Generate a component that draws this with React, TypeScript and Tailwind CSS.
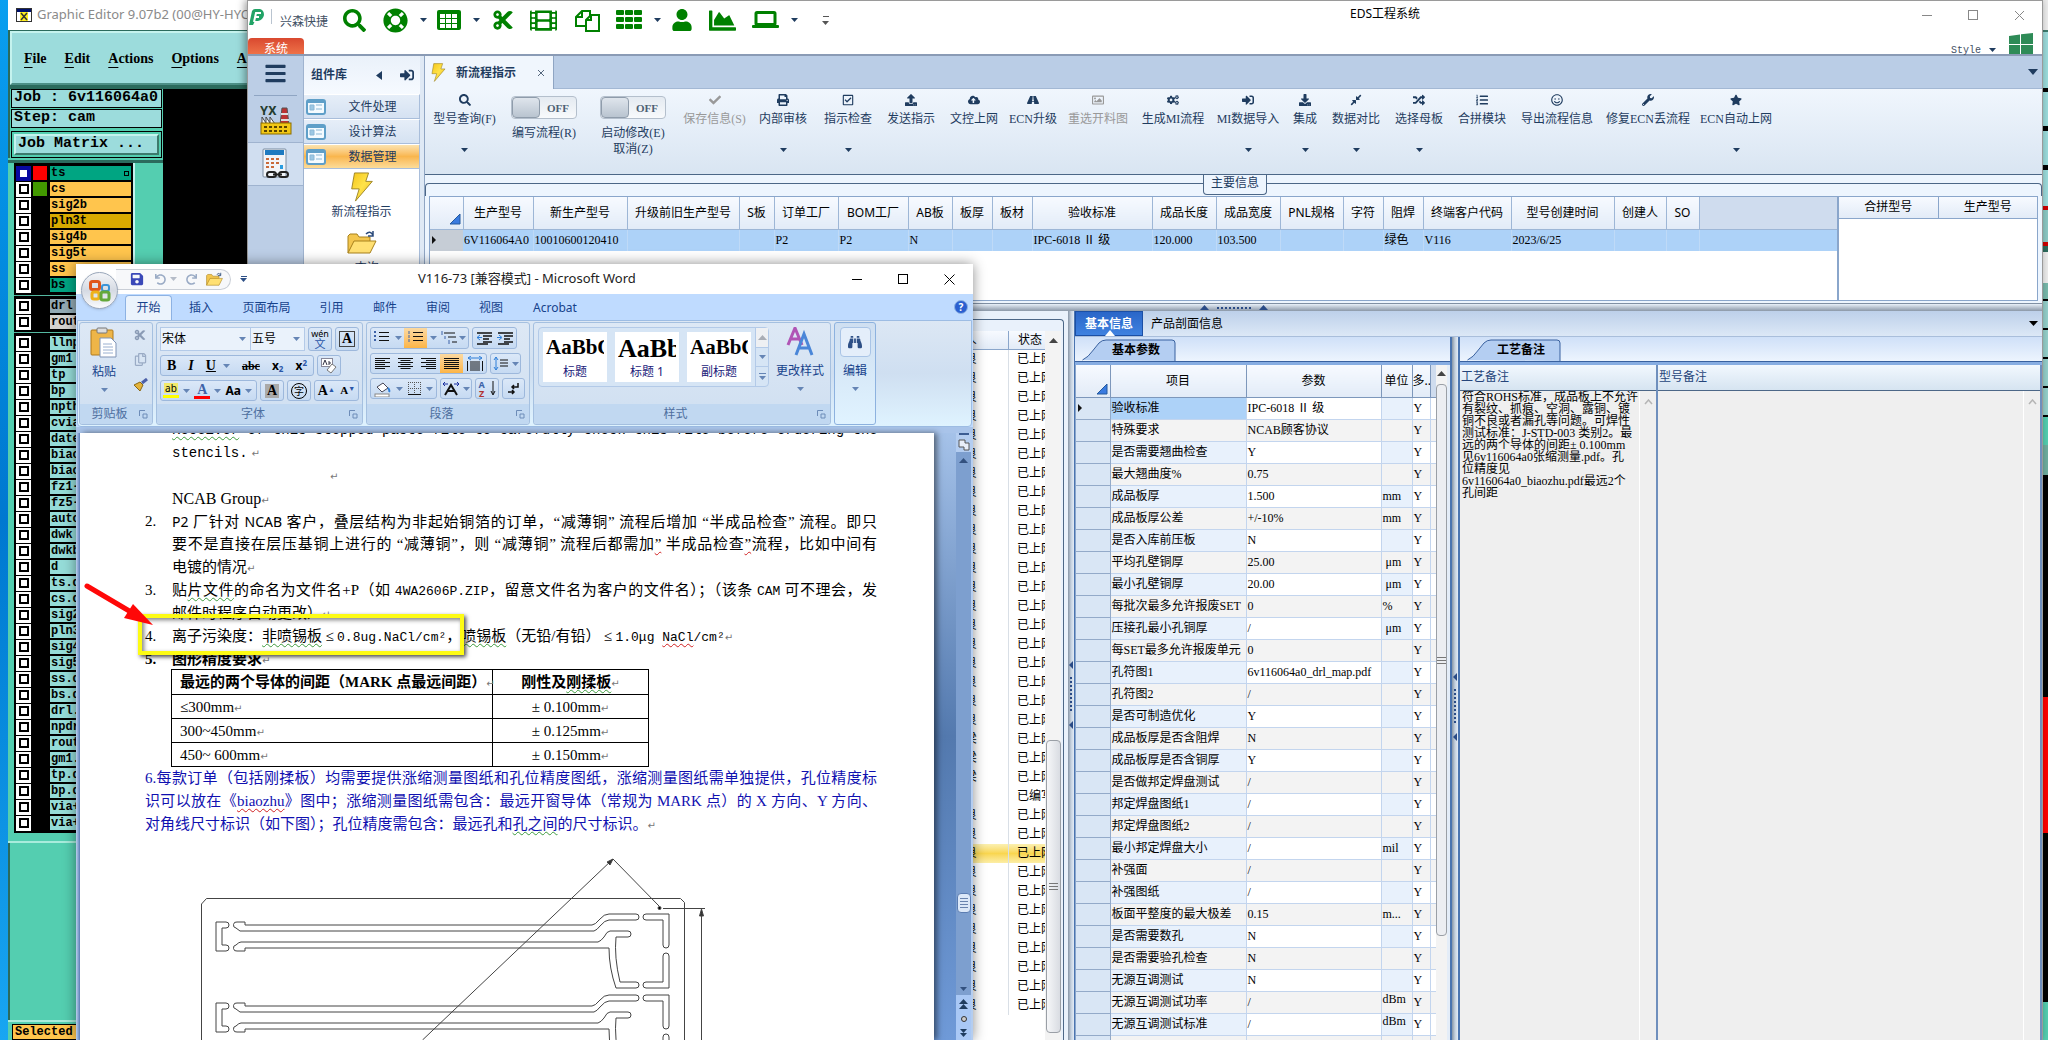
import React from "react";
import {
  FaSearch, FaLifeRing, FaCut, FaFilm, FaRegCopy, FaUser, FaChartArea, FaCheck, FaPrint, FaRegCheckSquare,
  FaUpload, FaCloudUploadAlt, FaRoad, FaRegImage, FaCogs, FaSignInAlt, FaDownload, FaCompressAlt, FaRandom,
  FaListOl, FaRegSmile, FaWrench, FaStar, FaBars, FaSave, FaUndo, FaRedo, FaBinoculars,
} from "react-icons/fa";

const SONG = "font-['Liberation_Serif','Noto_Sans_CJK_SC',serif]";
const UI = "font-['Noto_Sans','Noto_Sans_CJK_SC',sans-serif]";
const MONO = "font-['Liberation_Mono','Noto_Sans_CJK_SC',monospace]";

function Caret({ className = "text-[#1f3c5f]" }: { className?: string }) {
  return (
    <svg width="7" height="4" viewBox="0 0 7 4" className={`shrink-0 ${className}`}>
      <path d="M0 0h7L3.500 4z" fill="currentColor" />
    </svg>
  );
}

function CaretUp({ className = "text-[#1f3c5f]" }: { className?: string }) {
  return (
    <svg width="9" height="5" viewBox="0 0 9 5" className={`shrink-0 ${className}`}>
      <path d="M0 5h9L4.500 0z" fill="currentColor" />
    </svg>
  );
}

function Bolt({ className }: { className: string }) {
  return (
    <svg viewBox="0 0 24 32" className={className}>
      <defs>
        <linearGradient id="bolt" x1="0" y1="0" x2="1" y2="1">
          <stop offset="0" stopColor="#f5c518" />
          <stop offset="0.5" stopColor="#ffe34a" />
          <stop offset="1" stopColor="#e8b012" />
        </linearGradient>
      </defs>
      <path d="M4 1h15l-3 9h7L5 31l4-13H1z" fill="url(#bolt)" stroke="#9c8426" strokeWidth="1" />
    </svg>
  );
}

function Folder({ className }: { className: string }) {
  return (
    <svg viewBox="0 0 30 24" className={className}>
      <path d="M1 23V6l2-2h7l2 3h11v4" fill="#f3c64e" stroke="#a8811c" />
      <path d="M1 23l6-12h22l-6 12z" fill="#ffe073" stroke="#a8811c" />
      <path d="M19 4q4-4 7 1M26 1v5h-5" fill="none" stroke="#2b4a7a" strokeWidth="1.500" />
    </svg>
  );
}

/* ---------- Graphic Editor ---------- */

type Layer = { name: string; bg: string; swatch?: string; active?: boolean };
const ORANGE = "bg-[#ffc54d]";
const TEAL = "bg-[#95dcd8]";
const boardLayers: Layer[] = [
  { name: "ts", bg: "bg-[#00a582]", swatch: "bg-[#ff0000]", active: true },
  { name: "cs", bg: ORANGE, swatch: "bg-[#429900]" },
  { name: "sig2b", bg: ORANGE },
  { name: "pln3t", bg: "bg-[#d9aa00]" },
  { name: "sig4b", bg: ORANGE },
  { name: "sig5t", bg: ORANGE },
  { name: "ss", bg: ORANGE },
  { name: "bs", bg: "bg-[#00a582]" },
];
const drillLayers: Layer[] = [
  { name: "drl", bg: "bg-[#93aab4]" },
  { name: "rout", bg: "bg-[#d4d2cf]" },
];
const miscLayers: Layer[] = [
  "llnp", "gm1", "tp", "bp", "npth", "cvia", "date", "biaoji", "biaoji2", "fz1-6", "fz5-2", "auto", "dwk", "dwkb", "d",
  "ts.d", "cs.d", "sig2b", "pln3t", "sig4b", "sig5t", "ss.d", "bs.d", "drl.d", "npdrl", "rout.", "gm1.d", "tp.d", "bp.d",
  "via+", "via+1",
].map((name) => ({ name, bg: TEAL }));

function LayerRows({ layers }: { layers: Layer[] }) {
  return (
    <>
      {layers.map((l, i) => (
        <label key={i} className="flex h-4 items-center gap-0.5">
          <span className="flex size-[15px] items-center justify-center bg-white">
            <input
              type="checkbox"
              aria-label={l.name}
              className={
                l.active
                  ? "size-[15px] appearance-none border-4 border-[#0808a0] bg-white"
                  : "size-[10px] appearance-none border-2 border-black bg-white"
              }
            />
          </span>
          <span className={`h-[14px] w-[14px] ${l.swatch ?? "bg-black"}`} />
          <span className={`ml-px flex h-[14px] flex-1 items-center justify-between px-px ${l.bg}`}>
            {l.name}
            {l.active && <span className="mr-px size-[5px] border border-black" />}
          </span>
        </label>
      ))}
    </>
  );
}

const edgeStrip = [
  "h-[30px] bg-[#ededed]", "h-[2px] bg-[#3c7a6c]", "h-[56px] bg-[#9cdcdc]", "h-[4px] bg-black", "h-[34px] bg-[#9cdcdc]",
  "h-[5px] bg-black", "h-[34px] bg-[#9cdcdc]", "h-[5px] bg-black", "h-[36px] bg-[#9cdcdc]", "h-[4px] bg-[#c00]",
  "h-[32px] bg-[#8cc9c5]", "h-[4px] bg-[#c00]", "h-[6px] bg-[#2b6b5d]", "h-[31px] bg-[#ededed]", "h-[16px] bg-[#78b9ac]",
  "h-[2px] bg-black", "h-[27px] bg-[#95d0cb]", "h-[2px] bg-black", "h-[27px] bg-[#95d0cb]", "h-[2px] bg-black",
  "h-[27px] bg-[#95d0cb]", "h-[2px] bg-black", "h-[27px] bg-[#95d0cb]", "h-[2px] bg-black", "h-[28px] bg-[#54ceb0]",
  "h-[30px] bg-[#6fae9f]", "h-[222px] bg-black", "h-[136px] bg-[#ff0000]", "h-[169px] bg-black", "flex-1 bg-[#54ceb0]",
];

function GraphicEditor() {
  return (
    <section className="absolute inset-y-0 left-2 right-0 flex flex-col bg-[#2b6b5d]">
      <header className="flex h-[30px] shrink-0 items-center gap-[5px] bg-white pl-2">
        <svg width="16" height="14" viewBox="0 0 16 14">
          <rect x="0.500" y="0.500" width="15" height="13" fill="#fff" stroke="#333" />
          <rect x="1" y="1" width="14" height="3" fill="#00106b" />
          <rect x="4" y="4" width="8" height="9" fill="#ffee22" />
          <path d="M5 5l6 7M11 5l-6 7" stroke="#333" strokeWidth="1.500" />
        </svg>
        <h1 className={`text-[13px] text-[#8a8a8a] ${UI}`}>Graphic Editor 9.07b2 (00@HY-HYCAD)</h1>
      </header>
      <div className="flex min-h-0 flex-1 flex-col">
        <nav className="mt-px ml-0.5 flex h-[54px] shrink-0 items-center gap-[18px] border-2 border-[#c5f3ee] border-b-[#4c8f86] bg-[#9cdcdc] pl-3 font-['Liberation_Serif',serif] text-[14px] font-bold text-black">
          {["File", "Edit", "Actions", "Options", "Analysis"].map((m) => (
            <button key={m} className="whitespace-nowrap">
              <span className="underline underline-offset-4">{m[0]}</span>
              {m.slice(1)}
            </button>
          ))}
        </nav>
        <div className="mt-1 flex min-h-0 flex-1">
          <div className={`flex w-[155px] shrink-0 flex-col bg-[#54ceb0] font-bold text-black ${MONO}`}>
            <div className="flex flex-col gap-px border-l-2 border-[#2b6b5d] bg-[#54ceb0] px-px text-[15px]">
              <div className="flex h-[19px] items-center whitespace-nowrap border border-black bg-[#9cdcdc] px-0.5">Job : 6v116064a0</div>
              <div className="flex h-[19px] items-center border border-black bg-[#9cdcdc] px-0.5">Step: cam</div>
              <div className="mt-0.5 flex h-[27px] border border-black bg-[#54ceb0] p-0.5">
                <button className="flex flex-1 items-center border-2 border-[#c5f3ee] border-r-[#3c7a6c] border-b-[#3c7a6c] bg-[#9cdcdc] px-0.5">
                  Job Matrix ...
                </button>
              </div>
            </div>
            <div className="mt-0.5 h-[3px] bg-[#2b6b5d]" />
            <div className="ml-1.5 mr-7 flex flex-col gap-px border-r-2 border-[#c5f3ee] bg-[#54b8a0] text-[12px] leading-[14px]">
              <div className="border-2 border-black bg-black"><LayerRows layers={boardLayers} /></div>
              <div className="border-2 border-black bg-black"><LayerRows layers={drillLayers} /></div>
              <div className="border-2 border-black bg-black"><LayerRows layers={miscLayers} /></div>
            </div>
            <div className="mt-2 h-0.5 bg-[#a8ecdc]" />
            <div className="flex-1 border-l-2 border-[#2b6b5d]" />
            <div className="h-0.5 bg-[#a8ecdc]" />
            <div className="ml-1 mr-px mt-0.5 h-4 border border-black bg-[#ffc54d] px-0.5 text-[12px] leading-[15px]">Selected</div>
          </div>
          <div className="flex-1 bg-black" />
        </div>
      </div>
      <div className="absolute inset-y-0 right-0 flex w-[5px] flex-col">
        {edgeStrip.map((c, i) => <div key={i} className={c} />)}
      </div>
    </section>
  );
}

/* ---------- EDS ---------- */

function GridIcon({ wide = false }: { wide?: boolean }) {
  return wide ? (
    <svg width="26" height="20" viewBox="0 0 26 20">
      {[0, 9, 18].map((x) => [0, 7, 14].map((y) => <rect key={`${x}-${y}`} x={x} y={y} width="8" height="5" rx="1" fill="#008000" />))}
    </svg>
  ) : (
    <svg width="24" height="20" viewBox="0 0 24 20">
      <rect width="24" height="20" rx="2" fill="#008000" />
      {[3, 9, 15].map((x) => [4, 9, 14].map((y) => <rect key={`${x}-${y}`} x={x} y={y} width="5" height="4" fill="#fff" />))}
    </svg>
  );
}

function PagesIcon() {
  return (
    <svg width="25" height="23" viewBox="0 0 25 23" fill="#fff" stroke="#008000" strokeWidth="2">
      <path d="M1 8l6-6h8v15H1z" />
      <path d="M1 8h6V2" fill="none" />
      <path d="M11 11l5-5h8v16H11z" />
      <path d="M11 11h5V6" fill="none" />
    </svg>
  );
}

function QuickBar() {
  const btn = "flex items-center justify-center";
  return (
    <div className="flex h-full items-start">
      <svg width="18" height="20" viewBox="0 0 18 20" className="mt-[7px]">
        <path d="M1 17L4 3q1-2 3-2h5q4 1 4 6-1 5-6 6H7l-2 4z" fill="#21a366" />
        <path d="M6 14L8 5h5M7 9h4" stroke="#fff" strokeWidth="2" fill="none" />
      </svg>
      <div className="ml-[5px] mt-2 h-[15px] w-px bg-[#b9c4d0]" />
      <span className={`ml-2 mt-3 text-[12px] leading-[18px] text-[#3f5063] ${SONG}`}>兴森快捷</span>
      <div className="ml-[14px] mt-[7px] flex h-6 items-center text-[#008000]">
        <button aria-label="搜索" className={`${btn} w-6`}><FaSearch size={23} /></button>
        <button aria-label="帮助" className={`${btn} ml-4 w-[26px]`}><FaLifeRing size={25} /></button>
        <span className="ml-3"><Caret /></span>
        <button aria-label="表格" className={`${btn} ml-[10px]`}><GridIcon /></button>
        <span className="ml-3"><Caret /></span>
        <button aria-label="剪切" className={`${btn} ml-3`}><FaCut size={22} /></button>
        <button aria-label="胶片" className={`${btn} ml-4`}><FaFilm size={27} /></button>
        <button aria-label="复制" className={`${btn} ml-[18px]`}><PagesIcon /></button>
        <button aria-label="网格" className={`${btn} ml-4`}><GridIcon wide /></button>
        <span className="ml-3"><Caret /></span>
        <button aria-label="用户" className={`${btn} ml-[10px]`}><FaUser size={22} /></button>
        <button aria-label="图表" className={`${btn} ml-4`}><FaChartArea size={27} /></button>
        <button aria-label="电脑" className={`${btn} ml-4`}>
          <svg width="27" height="18" viewBox="0 0 27 18">
            <rect x="4" y="1.500" width="19" height="12" rx="1" fill="none" stroke="#008000" strokeWidth="3" />
            <rect y="14" width="27" height="3" rx="1" fill="#008000" />
          </svg>
        </button>
        <span className="ml-3"><Caret /></span>
        <span className="ml-[24px] flex flex-col items-center gap-1 text-[#555]"><span className="h-px w-1.5 bg-[#555]" /><Caret className="text-[#555]" /></span>
      </div>
    </div>
  );
}

type Tool = { label: string; w: string; icon?: React.ReactNode; toggle?: boolean; caret?: boolean; off?: boolean; extra?: string };
const tools: Tool[] = [
  { label: "型号查询(F)", w: "w-[59px]", icon: <FaSearch />, caret: true },
  { label: "编写流程(R)", w: "w-[70px]", toggle: true },
  { label: "启动修改(E)", w: "w-[78px]", toggle: true, extra: "取消(Z)" },
  { label: "保存信息(S)", w: "w-[55px]", icon: <FaCheck />, off: true },
  { label: "内部审核", w: "w-[52px]", icon: <FaPrint />, caret: true },
  { label: "指示检查", w: "w-[48px]", icon: <FaRegCheckSquare />, caret: true },
  { label: "发送指示", w: "w-[48px]", icon: <FaUpload /> },
  { label: "文控上网", w: "w-[48px]", icon: <FaCloudUploadAlt /> },
  { label: "ECN升级", w: "w-[40px]", icon: <FaRoad /> },
  { label: "重选开料图", w: "w-[60px]", icon: <FaRegImage />, off: true },
  { label: "生成MI流程", w: "w-[60px]", icon: <FaCogs /> },
  { label: "MI数据导入", w: "w-[60px]", icon: <FaSignInAlt />, caret: true },
  { label: "集成", w: "w-[24px]", icon: <FaDownload />, caret: true },
  { label: "数据对比", w: "w-[48px]", icon: <FaCompressAlt />, caret: true },
  { label: "选择母板", w: "w-[48px]", icon: <FaRandom />, caret: true },
  { label: "合拼模块", w: "w-[48px]", icon: <FaListOl /> },
  { label: "导出流程信息", w: "w-[72px]", icon: <FaRegSmile /> },
  { label: "修复ECN丢流程", w: "w-[80px]", icon: <FaWrench /> },
  { label: "ECN自动上网", w: "w-[66px]", icon: <FaStar />, caret: true },
];

function Toolbar() {
  return (
    <div className={`flex h-[86px] shrink-0 gap-[15px] border-b border-[#4c6787] bg-linear-to-b from-[#f0f6fd] to-[#d9e5f2] pl-[10px] pt-[3px] text-[12px] leading-[16px] text-[#1f3c5f] ${SONG}`}>
      {tools.map((t) =>
        t.toggle ? (
          <div key={t.label} className={`flex shrink-0 flex-col items-center whitespace-nowrap pt-1 ${t.w}`}>
            <label className="flex flex-col items-center gap-[6px]">
              <span className="flex h-[23px] w-[66px] rounded-sm border border-[#b4bfcc] bg-linear-to-b from-[#e4eaf1] to-[#f8fafc]">
                <input type="checkbox" className="w-7 appearance-none rounded-sm border border-[#8f9cab] bg-linear-to-b from-[#dfe5ec] to-[#b9c4d0]" />
                <span className="flex flex-1 items-center justify-center text-[11px] font-bold text-[#4d5f74]">OFF</span>
              </span>
              {t.label}
            </label>
            {t.extra && <button>{t.extra}</button>}
          </div>
        ) : (
          <button key={t.label} disabled={t.off} className={`flex h-[64px] shrink-0 flex-col items-center whitespace-nowrap ${t.w} ${t.off ? "text-[#999]" : ""}`}>
            <span className="flex h-[16px] items-center text-[12px]">{t.icon}</span>
            <span className="mt-[3px]">{t.label}</span>
            {t.caret && <span className="mt-auto mb-1"><Caret /></span>}
          </button>
        )
      )}
    </div>
  );
}

const mainCols: [string, string, string][] = [
  ["生产型号", "w-[70px]", "6V116064A0"],
  ["新生产型号", "w-[94px]", "10010600120410"],
  ["升级前旧生产型号", "w-[112px]", ""],
  ["S板", "w-[35px]", ""],
  ["订单工厂", "w-[64px]", "P2"],
  ["BOM工厂", "w-[70px]", "P2"],
  ["AB板", "w-[44px]", "N"],
  ["板厚", "w-[40px]", ""],
  ["板材", "w-[40px]", ""],
  ["验收标准", "w-[120px]", "IPC-6018 Ⅱ 级"],
  ["成品长度", "w-[64px]", "120.000"],
  ["成品宽度", "w-[64px]", "103.500"],
  ["PNL规格", "w-[63px]", ""],
  ["字符", "w-[40px]", ""],
  ["阻焊", "w-[40px]", "绿色"],
  ["终端客户代码", "w-[88px]", "V116"],
  ["型号创建时间", "w-[103px]", "2023/6/25"],
  ["创建人", "w-[52px]", ""],
  ["SO", "w-[33px]", ""],
];

const headGrad = "bg-linear-to-b from-[#f7faff] to-[#e2ebf7]";

function CornerMark() {
  return (
    <svg width="12" height="12" viewBox="0 0 12 12" className="ml-auto mr-0.5">
      <path d="M11 1v10H1z" fill="#3a7be0" stroke="#245a9e" />
    </svg>
  );
}

function RowPointer() {
  return (
    <svg width="4" height="8" viewBox="0 0 4 8" className="ml-0.5"><path d="M0 0v8l4-4z" fill="#111" /></svg>
  );
}

function MainInfo() {
  return (
    <section className="shrink-0 bg-[#edf5fe] px-1 pb-0.5">
      <div className="-mx-1 flex h-[21px] items-start">
        <div className="mt-2 h-[13px] w-[778px] rounded-tl border-l border-t border-[#4c6787]" />
        <h2 className={`h-5 rounded-b border border-t-0 border-[#4c6787] bg-[#edf5fe] px-[7px] text-[12px] leading-[16px] text-[#1f3c5f] ${SONG}`}>主要信息</h2>
        <div className="mt-2 h-[13px] flex-1 rounded-tr border-r border-t border-[#4c6787]" />
      </div>
      <div className="flex h-[105px] border border-[#8aa6cb] bg-white">
        <div className="min-w-0 flex-1 overflow-hidden">
          <table className="w-full table-fixed border-collapse text-left text-black">
            <thead>
              <tr className={`h-8 text-[12px] ${UI}`}>
                <th className={`w-[33px] border-b border-r border-[#9db6d6] pt-3 ${headGrad}`}><CornerMark /></th>
                {mainCols.map(([h, w]) => (
                  <th key={h} className={`overflow-hidden whitespace-nowrap border-b border-r border-[#9db6d6] text-center font-normal ${w} ${headGrad}`}>{h}</th>
                ))}
                <th className="border-b border-[#9db6d6] bg-[#cfdcee]" />
              </tr>
            </thead>
            <tbody>
              <tr className={`h-[22px] bg-[#add2f8] text-[12px] ${SONG}`}>
                <td className="bg-[#c6cdd6]"><RowPointer /></td>
                {mainCols.map(([h, , v]) => (
                  <td key={h} className="whitespace-nowrap border-r border-[#bfdaf7] px-px">{v}</td>
                ))}
                <td />
              </tr>
            </tbody>
          </table>
        </div>
        <div className="w-[200px] border-l-2 border-[#8aa6cb]">
          <table className="w-full table-fixed border-collapse">
            <thead>
              <tr className={`h-[21px] text-[12px] ${headGrad} ${UI}`}>
                <th className="border-b border-r border-[#8aa6cb] font-normal">合拼型号</th>
                <th className="border-b border-[#8aa6cb] font-normal">生产型号</th>
              </tr>
            </thead>
          </table>
        </div>
      </div>
    </section>
  );
}

const flowRows = Array.from({ length: 35 }, (_, i) => ({
  who: i === 23 ? "" : i >= 20 && i <= 22 ? "梁" : "良",
  status: i === 23 ? "已编写" : "已上网",
  hot: i === 26,
}));

function FlowList() {
  return (
    <section className="flex w-[643px] shrink-0 flex-col bg-[#e9f1fb] pr-1 pt-2">
      <div className="flex min-h-0 flex-1 flex-col rounded-tr border-r border-t border-[#4c6787] pt-[11px] pr-0.5">
        <div className="flex min-h-0 flex-1 bg-white">
          <table className={`min-w-0 flex-1 table-fixed self-start border-collapse text-left text-[12px] text-black ${SONG}`}>
            <thead>
              <tr className="h-[18px]">
                <th className={`w-[543px] border-b border-[#8aa6cb] ${headGrad}`} />
                <th className={`w-[44px] whitespace-nowrap border-b border-r border-[#8aa6cb] text-left font-normal ${headGrad}`}>人</th>
                <th className={`border-b border-[#8aa6cb] pl-[9px] text-left font-normal ${headGrad}`}>状态</th>
              </tr>
            </thead>
            <tbody>
              {flowRows.map((r, i) => (
                <tr key={i} className={`h-[19px] ${r.hot ? "bg-linear-to-b from-[#fbf0b0] via-[#f9d64f] to-[#fceea5]" : ""}`}>
                  <td />
                  <td className="border-r border-[#d9dfe6] p-0">{r.who}</td>
                  <td className="overflow-hidden whitespace-nowrap p-0 pl-2"><div className="w-7 overflow-hidden">{r.status}</div></td>
                </tr>
              ))}
            </tbody>
          </table>
          <div className="flex w-4 shrink-0 flex-col items-center bg-[#f3f3f3]">
            <CaretUp className="mt-[7px] text-[#444]" />
            <div className="mt-[397px] flex h-[293px] w-[15px] flex-col items-center justify-center gap-0.5 rounded-sm border border-[#9a9fa6] bg-linear-to-r from-[#f6f7f9] to-[#d9dce2]">
              {[0, 1, 2].map((i) => <div key={i} className="h-px w-[9px] bg-[#777]" />)}
            </div>
          </div>
        </div>
      </div>
    </section>
  );
}

function Splitter({ pad = "pt-[350px]" }: { pad?: string }) {
  return (
    <div className={`flex w-[6px] shrink-0 flex-col items-center gap-3 bg-linear-to-r from-[#8795a6] via-[#c3cfdd] to-[#e3ecf7] ${pad}`}>
      <svg width="4" height="70" viewBox="0 0 4 70">
        <path d="M4 0v8L0 4zM4 60v8L0 64z" fill="#2a4b86" />
        {Array.from({ length: 9 }, (_, i) => <rect key={i} x="1" y={16 + i * 4} width="2" height="2" fill="#2a4b86" />)}
      </svg>
    </div>
  );
}

const params: [string, string, string][] = [
  ["验收标准", "IPC-6018 Ⅱ 级", ""],
  ["特殊要求", "NCAB顾客协议", ""],
  ["是否需要翘曲检查", "Y", ""],
  ["最大翘曲度%", "0.75", ""],
  ["成品板厚", "1.500", "mm"],
  ["成品板厚公差", "+/-10%", "mm"],
  ["是否入库前压板", "N", ""],
  ["平均孔壁铜厚", "25.00", " μm"],
  ["最小孔壁铜厚", "20.00", " μm"],
  ["每批次最多允许报废SET", "0", "%"],
  ["压接孔最小孔铜厚", "/", " μm"],
  ["每SET最多允许报废单元", "0", ""],
  ["孔符图1", "6v116064a0_drl_map.pdf", ""],
  ["孔符图2", "/", ""],
  ["是否可制造优化", "Y", ""],
  ["成品板厚是否含阻焊", "N", ""],
  ["成品板厚是否含铜厚", "Y", ""],
  ["是否做邦定焊盘测试", "/", ""],
  ["邦定焊盘图纸1", "/", ""],
  ["邦定焊盘图纸2", "/", ""],
  ["最小邦定焊盘大小", "/", "mil"],
  ["补强面", "/", ""],
  ["补强图纸", "/", ""],
  ["板面平整度的最大极差", "0.15", "m..."],
  ["是否需要数孔", "N", ""],
  ["是否需要验孔检查", "N", ""],
  ["无源互调测试", "N", ""],
  ["无源互调测试功率", "/", "dBm"],
  ["无源互调测试标准", "/", "dBm"],
  ["", "", ""],
];

function SlantTab({ title }: { title: string }) {
  return (
    <div className="flex h-7 shrink-0 flex-col bg-linear-to-b from-[#cfe0f8] to-[#f2f8ff]">
      <div className="relative ml-[7px] mt-[2px] h-[22px] w-[94px]">
        <svg width="94" height="22" viewBox="0 0 94 22" className="absolute inset-0">
          <path d="M0.500 21q6-3 10-9L17 4q3-3 7-3h66q3 0 3 3v18" fill="#b4cef2" stroke="#39619f" />
        </svg>
        <h3 className={`relative pl-[30px] text-[12px] font-bold leading-[22px] text-black ${UI}`}>{title}</h3>
      </div>
      <div className="h-1 border-t border-[#39619f] bg-[#87ade2]" />
    </div>
  );
}

function ParamPanel() {
  return (
    <section className="flex w-[377px] shrink-0 flex-col border-r-2 border-[#4a74b0] bg-[#e4edf8]">
      <SlantTab title="基本参数" />
      <div className="flex min-h-0 flex-1 overflow-hidden border-l border-[#8aa6cb]">
        <div className="w-[360px] overflow-hidden">
          <table className={`w-full table-fixed border-collapse text-left text-[12px] text-black ${SONG}`}>
            <thead>
              <tr className={`h-8 ${UI}`}>
                <th className={`w-[34px] border-b border-r border-[#7d97bb] pt-4 ${headGrad}`}><CornerMark /></th>
                <th className={`w-[136px] border-b border-r border-[#7d97bb] text-center font-normal ${headGrad}`}>项目</th>
                <th className={`w-[135px] border-b border-r border-[#7d97bb] text-center font-normal ${headGrad}`}>参数</th>
                <th className={`w-[31px] whitespace-nowrap border-b border-r border-[#7d97bb] text-center font-normal ${headGrad}`}>单位</th>
                <th className={`w-[18px] overflow-hidden whitespace-nowrap border-b border-r border-[#7d97bb] text-left font-normal ${headGrad}`}>多..</th>
                <th className="border-b border-[#7d97bb] bg-[#cfdcee]" />
              </tr>
            </thead>
            <tbody>
              {params.map(([k, v, u], i) => {
                const tint = i % 2 ? "bg-[#f3f3f3]" : "bg-[#e8f1fc]";
                const plain = i % 2 ? "bg-[#f3f3f3]" : "bg-white";
                const edge = "border-b border-r border-[#c3d5ee] p-0 pl-px whitespace-nowrap overflow-hidden";
                return (
                  <tr key={i} className="h-[22px]">
                    <td className="border-b border-r border-[#93aac9] bg-[#d9e6f5]">{i === 0 && <RowPointer />}</td>
                    <td className={`${edge} ${i === 0 ? "bg-[#add2f8]" : tint}`}>{k}</td>
                    <td className={`${edge} ${plain}`}>{v}</td>
                    <td className={`${edge} whitespace-pre ${tint} ${u === "dBm" ? "align-top leading-[14px]" : ""}`}>{u}</td>
                    <td className={`${edge} ${plain}`}>{k && "Y"}</td>
                    <td className={`border-b border-[#c3d5ee] ${plain}`} />
                  </tr>
                );
              })}
            </tbody>
          </table>
        </div>
        <div className="flex w-[11px] flex-col items-center bg-[#f3f3f3]">
          <CaretUp className="mt-[6px] text-[#444]" />
          <div className="mt-2 flex h-[552px] w-[11px] shrink-0 flex-col items-center justify-center gap-0.5 rounded-sm border border-[#9a9fa6] bg-[#eceef2]">
            {[0, 1, 2].map((i) => <div key={i} className="h-px w-[9px] bg-[#777]" />)}
          </div>
        </div>
      </div>
    </section>
  );
}

const craftNote = `符合ROHS标准，成品板上不允许
有裂纹、抓痕、空洞、露铜、镀
铜不良或者漏孔等问题。可焊性
测试标准：J-STD-003 类别2。最
远的两个导体的间距± 0.100mm
见6v116064a0张缩测量.pdf。孔
位精度见
6v116064a0_biaozhu.pdf最远2个
孔间距`;

function Note({ id, title, value, wide }: { id: string; title: string; value: string; wide?: boolean }) {
  return (
    <div className={`flex min-w-0 flex-col border-r-2 border-[#6f8fbd] ${wide ? "flex-1" : "w-[198px] shrink-0"}`}>
      <label htmlFor={id} className={`h-[26px] shrink-0 border-b border-[#4c6787] bg-linear-to-b from-[#f2f8fe] to-[#d6e4f1] pl-px text-[12px] leading-[24px] text-[#26457a] ${UI}`}>{title}</label>
      <div className="flex min-h-0 flex-1 bg-[#efefef]">
        <textarea id={id} readOnly defaultValue={value} className={`min-w-0 flex-1 resize-none overflow-hidden whitespace-pre bg-transparent pl-0.5 text-[12px] leading-[12px] text-black outline-none ${SONG}`} />
        <div className="flex w-[17px] justify-center border-l border-white pt-2">
          <svg width="9" height="6" viewBox="0 0 9 6"><path d="M1 5l3.500-4L8 5" fill="none" stroke="#b5b5b5" strokeWidth="1.500" /></svg>
        </div>
      </div>
    </div>
  );
}

function EdsWindow() {
  return (
    <section className="absolute inset-y-0 left-[247px] right-[5px] flex flex-col border-x border-t border-[#9a9a9a] bg-white shadow-[-2px_0_8px_rgba(0,0,0,0.4)]">
      <header className="flex h-[55px] shrink-0 border-b-2 border-[#8a9bb5]">
        <div className="relative w-[1102px]">
          <QuickBar />
          <button className={`absolute bottom-0 left-0 h-4 w-[56px] overflow-hidden rounded-t-sm bg-linear-to-b from-[#d9482f] to-[#ee7148] text-[12px] leading-[22px] text-white ${SONG}`}>系统</button>
        </div>
        <h1 className={`flex-1 whitespace-nowrap pt-1 text-[12px] leading-[18px] text-black ${UI}`}>EDS工程系统</h1>
        <div className="flex flex-col">
          <div className="flex h-7 items-center justify-end gap-9 pr-[17px]">
            <button aria-label="最小化" className="h-px w-[10px] bg-[#888]" />
            <button aria-label="最大化" className="size-[10px] border border-[#888]" />
            <button aria-label="关闭">
              <svg width="11" height="11" viewBox="0 0 11 11"><path d="M1 1l9 9M10 1l-9 9" stroke="#888" /></svg>
            </button>
          </div>
          <div className="mt-auto flex items-end justify-end pr-[9px] text-[#3f5063]">
            <button className={`mr-[13px] flex h-2 items-center gap-2 text-[10px] ${MONO}`}>Style <Caret /></button>
            <svg width="24" height="21" viewBox="0 0 24 21">
              <path d="M0 3l11-1.500V11H0zM12 1.300L24 0v11H12zM0 12h11v9H0zM12 12h12v9H12z" fill="#2e8b57" />
            </svg>
          </div>
        </div>
      </header>
      <div className="flex min-h-0 flex-1">
        <nav className="flex w-[55px] shrink-0 flex-col items-center bg-[#bccee6]">
          <button aria-label="菜单" className="mt-[6px] text-[#1f3c5f]"><FaBars size={23} /></button>
          <div className="mt-[10px] h-px w-[43px] bg-[#8fa5c3]" />
          <button aria-label="YX" className="flex h-[47px] w-full shrink-0 items-center justify-center border-b border-[#9fb3cf]">
            <svg width="32" height="32" viewBox="0 0 32 32">
              <text x="0" y="12" fontSize="13" fontWeight="bold" fill="#243c2e" fontFamily="Roboto">YX</text>
              <path d="M20 22l2-17h5l2 17z" fill="#b33" stroke="#555" />
              <path d="M21 11h7M21 17h8" stroke="#ddd" strokeWidth="2" />
              <path d="M2 21v-7l4 6v-6l4 6v-6l5 7z" fill="#fff" stroke="#444" />
              <rect x="1" y="20" width="30" height="11" fill="#f2c715" stroke="#8a6c00" />
              <path d="M4 24h3m2 0h3m2 0h3m2 0h3m2 0h3M4 28h3m2 0h3m2 0h3m2 0h3m2 0h3" stroke="#5a4500" strokeWidth="2" />
            </svg>
          </button>
          <button aria-label="计算" className="flex h-[43px] w-full shrink-0 items-center justify-center border-b border-[#9fb3cf] bg-[#d0def0]">
            <svg width="28" height="32" viewBox="0 0 28 32">
              <rect x="1" y="1" width="23" height="28" rx="1" fill="#f1f4f8" stroke="#7a8ca0" />
              <rect x="3" y="2" width="19" height="5" fill="#1e7ac0" />
              <path d="M4 11h3m2 0h3m2 0h3M4 15h3m2 0h3m2 0h3M4 19h3m2 0h3" stroke="#c96a3a" strokeWidth="2" />
              <path d="M18 17h3v4h-3z" fill="#2b9de0" />
              <rect x="5" y="24" width="9" height="5" rx="2.500" fill="none" stroke="#222" strokeWidth="2" />
              <rect x="17" y="24" width="9" height="5" rx="2.500" fill="none" stroke="#222" strokeWidth="2" />
              <path d="M11 26.500h9" stroke="#222" strokeWidth="2" />
            </svg>
          </button>
        </nav>
        <aside className={`flex w-[117px] shrink-0 flex-col border-l border-[#9fb3cf] bg-white text-[12px] text-[#1f3c5f] ${SONG}`}>
          <div className="flex h-[38px] shrink-0 items-center bg-linear-to-b from-[#eaf1fa] to-[#f6faff] pl-[7px]">
            <h2 className="font-bold">组件库</h2>
            <svg width="6" height="9" viewBox="0 0 6 9" className="ml-[29px]"><path d="M6 0v9L0 4.500z" fill="#1f3c5f" /></svg>
            <FaSignInAlt size={14} className="ml-[18px]" />
          </div>
          {["文件处理", "设计算法", "数据管理"].map((t, i) => (
            <button key={t} className={`flex h-[25px] shrink-0 items-center border-b border-r border-t border-[#a9bedb] border-t-white pl-0.5 ${i === 2 ? "bg-linear-to-b from-[#fbe3ae] via-[#f9b64d] to-[#fcdc98]" : "bg-linear-to-b from-[#e6eef8] to-[#d5e2f2]"}`}>
              <svg width="20" height="16" viewBox="0 0 20 16">
                <rect x="1" y="1" width="18" height="14" rx="2" fill="#f4fbff" stroke="#5f9fc8" strokeWidth="2" />
                <path d="M2 3h16" stroke="#5f9fc8" strokeWidth="2" />
                <path d="M4 6h4v5H4zM10 6h6M10 10h6" fill="#9cc8e4" stroke="#8bb8d6" />
              </svg>
              <span className="flex-1">{t}</span>
            </button>
          ))}
          <div className="flex flex-col items-center border-r border-[#a9bedb] pt-[3px] leading-[16px]">
            <Bolt className="h-[30px] w-6" />
            <button className="mt-0.5">新流程指示</button>
            <Folder className="mt-2.5 h-6 w-[30px]" />
            <button className="mt-1.5">Pcs查询2</button>
          </div>
        </aside>
        <div className="w-[5px] shrink-0 border-r border-[#8fa5c3] bg-[#dfe9f5]" />
        <main className="flex min-w-0 flex-1 flex-col">
          <div className="flex h-[33px] shrink-0 items-center justify-between border-b border-[#a3b8d4] bg-[#bacde6] pr-1">
            <div className={`-mb-px flex h-[33px] w-[129px] items-center border-r border-[#8fa5c3] bg-[#f0f6fd] pl-1.5 text-[12px] text-[#1f3c5f] ${SONG}`}>
              <Bolt className="h-[19px] w-[15px]" />
              <span className="ml-[10px] font-bold">新流程指示</span>
              <button aria-label="关闭标签" className="ml-auto mr-2">
                <svg width="8" height="8" viewBox="0 0 8 8"><path d="M1 1l6 6M7 1l-6 6" stroke="#55677d" /></svg>
              </button>
            </div>
            <svg width="10" height="6" viewBox="0 0 10 6"><path d="M0 0h10L5 6z" fill="#1f3c5f" /></svg>
          </div>
          <Toolbar />
          <MainInfo />
          <div className="flex h-2 shrink-0 items-center justify-center gap-2 border-t border-[#7f8fa3] bg-linear-to-b from-[#e8f0f9] to-[#8b98a8]">
            <CaretUp className="text-[#2a4b86]" />
            <div className="w-[34px] border-t-2 border-dotted border-[#2a4b86]" />
            <CaretUp className="text-[#2a4b86]" />
          </div>
          <div className="flex min-h-0 flex-1">
            <FlowList />
            <Splitter />
            <div className="flex min-w-0 flex-1 flex-col border-l border-[#4a74b0]">
              <div className={`flex h-[26px] shrink-0 items-center border-b border-[#a9bedb] bg-linear-to-b from-[#bdd0ea] to-[#dce8f6] pr-1 text-[12px] leading-[22px] ${UI}`}>
                <button className="relative h-full w-[68px] border border-[#1b4fa5] bg-linear-to-b from-[#2a66c8] to-[#3f82e0] font-bold text-white">
                  基本信息
                  <svg width="10" height="6" viewBox="0 0 10 6" className="absolute -bottom-px left-[29px]"><path d="M5 0l5 6H0z" fill="#fff" /></svg>
                </button>
                <button className="ml-2 text-black">产品剖面信息</button>
                <svg width="9" height="5" viewBox="0 0 9 5" className="ml-auto"><path d="M0 0h9L4.500 5z" fill="#000" /></svg>
              </div>
              <div className="flex min-h-0 flex-1">
                <ParamPanel />
                <Splitter pad="pt-[336px]" />
                <section className="flex min-w-0 flex-1 flex-col border-l-2 border-[#4a74b0]">
                  <SlantTab title="工艺备注" />
                  <div className="flex min-h-0 flex-1">
                    <Note id="craft-note" title="工艺备注" value={craftNote} />
                    <Note id="model-note" title="型号备注" value="" wide />
                  </div>
                </section>
              </div>
            </div>
          </div>
        </main>
      </div>
    </section>
  );
}

/* ---------- Word ---------- */

const cell = "flex h-full items-center justify-center";
const box = "flex shrink-0 items-center rounded-[3px] border border-[#9db8dc] bg-linear-to-b from-[#dbe8f8] to-[#c6daf2]";

function Lines({ widths, x = 0, children }: { widths: number[]; x?: number; children?: React.ReactNode }) {
  return (
    <svg width="16" height="14" viewBox="0 0 16 14">
      {widths.map((w, i) => <rect key={i} x={x} y={1 + i * Math.round(12 / widths.length)} width={w} height="1" fill="#111" />)}
      {children}
    </svg>
  );
}

function AlignIcon({ kind }: { kind: "left" | "center" | "right" | "full" }) {
  return (
    <svg width="15" height="13" viewBox="0 0 15 13">
      {[0, 1, 2, 3, 4, 5].map((i) => {
        const w = kind === "full" || i % 2 === 0 ? 15 : 10;
        const x = kind === "left" || kind === "full" ? 0 : kind === "right" ? 15 - w : (15 - w) / 2;
        return <rect key={i} x={x} y={i * 2 + 1} width={w} height="1" fill="#111" />;
      })}
    </svg>
  );
}

function GroupFooter({ title }: { title: string }) {
  return (
    <footer className={`flex h-5 shrink-0 items-center justify-center rounded-b-[3px] bg-[#c1d8f1] text-[12px] text-[#4e6f9f] ${UI}`}>
      <span className="flex-1 text-center">{title}</span>
      <button aria-label={`${title}设置`} className="mr-1">
        <svg width="9" height="9" viewBox="0 0 9 9"><path d="M0.500 6V0.500H6M4 4h4v4H4z" fill="none" stroke="#6d8cb8" /></svg>
      </button>
    </footer>
  );
}

const group = "flex shrink-0 flex-col rounded-[3px] border border-[#a5c0e0] bg-linear-to-b from-[#dde8f5] to-[#cfdff1]";
const wc = "text-[#6585b5]";

function Ribbon() {
  return (
    <div className={`mx-px flex h-[107px] shrink-0 gap-[3px] rounded-b border border-[#9dbce3] bg-linear-to-b from-[#dce7f4] via-[#cfdff1] to-[#dff3ff] p-px text-[#16428b] ${UI}`}>
      <section className={`w-[74px] ${group}`}>
        <div className="flex flex-1 text-[12px]">
          <button className="flex w-[48px] flex-col items-center pt-1 leading-[16px]">
            <svg width="28" height="31" viewBox="0 0 28 31">
              <rect x="1" y="3" width="22" height="25" rx="1" fill="#eeb548" stroke="#b07b1d" />
              <rect x="7" y="1" width="10" height="5" rx="1" fill="#ddd" stroke="#777" />
              <path d="M10 11h11l5 5v14H10z" fill="#fff" stroke="#7e93b5" />
              <path d="M13 17h9M13 20h10M13 23h10M13 26h10" stroke="#9ab0d0" />
            </svg>
            <span className="mt-1.5">粘贴</span>
            <Caret className={`mt-2 ${wc}`} />
          </button>
          <div className="flex flex-1 flex-col items-center gap-3 pt-1.5">
            <button aria-label="剪切" className="text-[#8a9bb5]"><FaCut size={12} /></button>
            <button aria-label="复制" className="text-[#9aabc5]"><FaRegCopy size={13} /></button>
            <button aria-label="格式刷">
              <svg width="15" height="14" viewBox="0 0 15 14"><path d="M14 1L9 5" stroke="#4b5fa8" strokeWidth="3" /><path d="M1 7l6-3 3 3-3 6z" fill="#e3b33a" stroke="#8a6714" /></svg>
            </button>
          </div>
        </div>
        <GroupFooter title="剪贴板" />
      </section>
      <section className={`w-[207px] ${group}`}>
        <div className="flex flex-1 flex-col gap-1 px-[3px] pt-1 text-black">
          <div className="flex h-6 gap-[3px] text-[12px]">
            <div className="flex border border-[#b3cae8] bg-[#eaf2fb]">
              <div className="flex w-[90px] items-center border-r border-[#b3cae8] pr-1">
                <select aria-label="字体" className="w-full appearance-none bg-transparent pl-px outline-none"><option>宋体</option></select>
                <Caret className={wc} />
              </div>
              <div className="flex w-[53px] items-center pr-1">
                <select aria-label="字号" className="w-full appearance-none bg-transparent pl-px outline-none"><option>五号</option></select>
                <Caret className={wc} />
              </div>
            </div>
            <button className={`${box} w-6 flex-col justify-center text-[9px] leading-[9px]`}><span>wén</span><span className="text-[11px] leading-[11px] text-[#2a56a8]">文</span></button>
            <button className={`${box} w-6 justify-center`}><span className="border border-[#444] px-0.5 font-['Liberation_Serif',serif] text-[14px] font-bold leading-[14px]">A</span></button>
          </div>
          <div className="flex h-[21px] gap-[3px] font-['Liberation_Serif',serif] text-[14px]">
            <div className={`${box} w-[154px] justify-between px-1.5`}>
              <button className="font-bold">B</button>
              <button className="font-bold italic">I</button>
              <span className="flex items-center gap-[7px]"><button className="font-bold underline">U</button><Caret className={wc} /></span>
              <button className="text-[12px] font-bold line-through">abc</button>
              <button className={`text-[12px] font-bold ${UI}`}>x<sub className="text-[8px] text-[#2a56a8]">2</sub></button>
              <button className={`text-[12px] font-bold ${UI}`}>x<sup className="text-[8px] text-[#2a56a8]">2</sup></button>
            </div>
            <button className={`${box} w-6 justify-center`} aria-label="清除格式">
              <svg width="17" height="16" viewBox="0 0 17 16"><rect x="0.500" y="0.500" width="11" height="8" fill="#fff" stroke="#889" /><path d="M2 7l2-5 2 5M8 3v4M8 5h2" stroke="#334" fill="none" /><path d="M6 12l5-6 4 3-5 6z" fill="#fff" stroke="#777" /></svg>
            </button>
          </div>
          <div className="flex h-[21px] gap-[3px] text-[12px]">
            <div className={`${box} w-[97px] justify-between px-0.5 pr-1`}>
              <button aria-label="突出显示" className="flex flex-col items-center">
                <span className="bg-[#f2ea6a] px-px text-[10px] leading-[10px]">ab</span>
                <span className="mt-0.5 h-[3px] w-4 bg-[#ffff00]" />
              </button>
              <Caret className={wc} />
              <button className="flex flex-col items-center font-['Liberation_Serif',serif] text-[14px] font-bold leading-[13px] text-[#3d62a8]">A<span className="h-[3px] w-4 bg-[#ff0000]" /></button>
              <Caret className={wc} />
              <button className="font-bold">Aa</button>
              <Caret className={wc} />
            </div>
            <button className={`${box} w-6 justify-center`}><span className="bg-[#aaa] px-0.5 font-['Liberation_Serif',serif] text-[14px] font-bold leading-[14px]">A</span></button>
            <button className={`${box} w-6 justify-center`}><span className="w-4 rounded-full border border-black text-[10px] leading-[14px]">字</span></button>
            <div className={`${box} flex-1 justify-around font-['Liberation_Serif',serif] font-bold`}>
              <button className="text-[14px]">A<sup className="text-[7px] text-[#2a56a8]">▲</sup></button>
              <button className="text-[11px]">A<sup className="text-[7px] text-[#2a56a8]">▼</sup></button>
            </div>
          </div>
        </div>
        <GroupFooter title="字体" />
      </section>
      <section className={`w-[164px] ${group}`}>
        <div className="flex flex-1 flex-col gap-1 px-[3px] pt-1">
          <div className="flex h-[22px] gap-[3px]">
            <div className={`${box} w-[99px]`}>
              <button aria-label="项目符号" className={`${cell} w-[22px]`}><Lines widths={[10, 10, 10]} x={5}><path d="M0 1h2M0 5h2M0 9h2" stroke="#3d62a8" strokeWidth="2" /></Lines></button>
              <span className={`${cell} w-[11px]`}><Caret className={wc} /></span>
              <button aria-label="编号" className={`${cell} w-[23px] bg-linear-to-b from-[#fbd9a0] to-[#fdb544]`}><Lines widths={[10, 10, 10]} x={5}><path d="M1 0v3M1 4v3M1 8v3" stroke="#3d62a8" /></Lines></button>
              <span className={`${cell} w-[12px]`}><Caret className={wc} /></span>
              <button aria-label="多级列表" className={`${cell} w-[20px]`}>
                <svg width="16" height="14" viewBox="0 0 16 14"><path d="M3 2h11M7 6h8M11 11h5" stroke="#111" /><path d="M1 0v4M4 5v3M8 9v4" stroke="#3d62a8" /></svg>
              </button>
              <span className={cell}><Caret className={wc} /></span>
            </div>
            <div className={`${box} w-[45px] justify-around`}>
              {["减少缩进", "增加缩进"].map((t, i) => (
                <button key={t} aria-label={t}>
                  <svg width="16" height="13" viewBox="0 0 16 13"><path d="M1 1h15M7 4h9M7 7h6M7 10h9M1 12h11" stroke="#111" strokeWidth="1.500" /><path d={i ? "M0 5.500h4M2 3l3 2.500L2 8" : "M1 5.500h5M4 3L1 5.500 4 8"} stroke="#2f7fd8" fill="none" /></svg>
                </button>
              ))}
            </div>
          </div>
          <div className="flex h-[21px] gap-[3px]">
            <div className={`${box} w-[117px]`}>
              <button aria-label="左对齐" className={`${cell} flex-1`}><AlignIcon kind="left" /></button>
              <button aria-label="居中" className={`${cell} flex-1`}><AlignIcon kind="center" /></button>
              <button aria-label="右对齐" className={`${cell} flex-1`}><AlignIcon kind="right" /></button>
              <button aria-label="两端对齐" className={`${cell} flex-1 bg-linear-to-b from-[#fbd9a0] to-[#fdb544]`}><AlignIcon kind="full" /></button>
              <button aria-label="分散对齐" className={`${cell} flex-1`}>
                <svg width="16" height="16" viewBox="0 0 16 16"><path d="M1 2h14M4 0L1 2l3 2M12 0l3 2-3 2" stroke="#2f7fd8" fill="none" /><path d="M3 6h10M3 8h10M3 10h10M3 12h10M3 14h10M0.500 5v10M15.500 5v10" stroke="#111" /></svg>
              </button>
            </div>
            <div className={`${box} w-[31px] justify-around`}>
              <button aria-label="行距"><svg width="16" height="15" viewBox="0 0 16 15"><path d="M3 1v13M1 4l2-3 2 3M1 11l2 3 2-3" stroke="#2f7fd8" fill="none" /><path d="M7 4h8M7 7h8M7 10h8" stroke="#111" /></svg></button>
              <Caret className={wc} />
            </div>
          </div>
          <div className="flex h-[21px] gap-[3px] text-black">
            <div className={`${box} w-[67px] justify-around`}>
              <button aria-label="底纹"><svg width="17" height="16" viewBox="0 0 17 16"><path d="M3 6l6-4 5 5-6 4z" fill="#fff" stroke="#445" /><path d="M14 7q2 2 1 4" stroke="#2f7fd8" fill="none" strokeWidth="2" /><rect x="1" y="13" width="14" height="3" fill="#fff" stroke="#888" /></svg></button>
              <Caret className={wc} />
              <button aria-label="边框"><svg width="13" height="13" viewBox="0 0 13 13"><path d="M0.500 0v12M6.500 0v12M12.500 0v12M0 0.500h12M0 6.500h12" stroke="#555" strokeDasharray="1 1" /><path d="M0 12.500h13" stroke="#111" /></svg></button>
              <Caret className={wc} />
            </div>
            <div className={`${box} w-8 justify-around`}>
              <button aria-label="中文版式"><svg width="18" height="15" viewBox="0 0 18 15"><path d="M3 14L9 4l6 10M5 10h8" stroke="#111" strokeWidth="2" fill="none" /><path d="M1 3h5M3 1L1 3l2 2M17 3h-5M15 1l2 2-2 2" stroke="#1a2fa0" fill="none" /></svg></button>
              <Caret className={wc} />
            </div>
            <button className={`${box} w-6 justify-around`} aria-label="排序">
              <span className="flex flex-col text-[9px] font-bold leading-[9px]"><span className="text-[#3d62a8]">A</span><span className="text-[#b03030]">Z</span></span>
              <svg width="6" height="15" viewBox="0 0 6 15"><path d="M3 0v13M1 10l2 4 2-4" stroke="#111" fill="none" /></svg>
            </button>
            <button className={`${box} w-[23px] justify-center`} aria-label="编辑标记">
              <svg width="13" height="13" viewBox="0 0 13 13"><path d="M11 1v4H5M7 3L5 5l2 2M1 10h6M5 8l2 2-2 2" stroke="#111" fill="none" strokeWidth="1.500" /></svg>
            </button>
          </div>
        </div>
        <GroupFooter title="段落" />
      </section>
      <section className={`w-[298px] ${group}`}>
        <div className="flex flex-1 px-1 pt-1">
          <div className="flex h-[60px] rounded border border-[#b3cae8] bg-[#d6e5f5]">
            <div className="flex gap-2 p-1">
              {[["标题", "text-[21px]"], ["标题 1", "text-[26px]"], ["副标题", "text-[21px]"]].map(([t, s]) => (
                <button key={t} className="flex h-[50px] w-16 flex-col overflow-hidden bg-white text-[12px] text-[#1a1a7a]">
                  <span className="flex h-8 w-[58px] items-center self-center overflow-hidden"><span className={`whitespace-nowrap font-['Liberation_Serif',serif] font-bold text-black ${s}`}>AaBbCc</span></span>
                  <span className="w-full leading-[16px]">{t}</span>
                </button>
              ))}
            </div>
            <div className="flex w-[13px] flex-col divide-y divide-[#b3cae8] border-l border-[#b3cae8]">
              <button aria-label="上一行" className="flex flex-1 items-center justify-center bg-[#eef0f3]"><CaretUp className="text-[#a9adb5]" /></button>
              <button aria-label="下一行" className="flex flex-1 items-center justify-center"><Caret className={wc} /></button>
              <button aria-label="其他" className="flex flex-1 flex-col items-center justify-center gap-0.5"><span className="h-px w-[7px] bg-[#6585b5]" /><Caret className={wc} /></button>
            </div>
          </div>
          <button className="ml-[5px] flex w-[52px] flex-col items-center text-[12px] leading-[16px]">
            <svg width="28" height="30" viewBox="0 0 28 30">
              <path d="M2 18L9 1l7 17M5 12h8" fill="none" stroke="#b055b5" strokeWidth="3" />
              <path d="M10 28L18 7l8 21M13 21h10" fill="none" stroke="#4a86d8" strokeWidth="3" />
            </svg>
            <span className="mt-1.5 whitespace-nowrap">更改样式</span>
            <Caret className={`mt-2 ${wc}`} />
          </button>
        </div>
        <GroupFooter title="样式" />
      </section>
      <section className="flex w-[42px] shrink-0 flex-col items-center rounded-[3px] border border-[#8db2df] bg-linear-to-b from-[#cfdff1] to-[#e0f3ff] pt-1">
        <button className="flex flex-col items-center text-[12px] leading-[16px]">
          <span className="flex h-[30px] w-[31px] items-center justify-center rounded border border-[#a9c4e6] bg-[#e4eefa] text-[#2d4f86]"><FaBinoculars size={14} /></span>
          <span className="mt-1.5">编辑</span>
          <Caret className={`mt-2 ${wc}`} />
        </button>
      </section>
    </div>
  );
}

function Ret() {
  return <span className="font-['DejaVu_Sans',sans-serif] text-[10px] font-normal leading-none text-[#777]">↵</span>;
}

function Le() {
  return <span className="inline-block w-[15px] text-center">≤</span>;
}

function M({ children }: { children: React.ReactNode }) {
  return <span className={`text-[13px] ${MONO}`}>{children}</span>;
}

const green = "underline decoration-[#3c9a3c] decoration-wavy decoration-1 underline-offset-2";
const red = "underline decoration-[#d02020] decoration-wavy decoration-1 underline-offset-2";
const fill = "h-[23px] [text-align-last:justify]";

function Item({ n, children, full, bold }: { n?: string; children: React.ReactNode; full?: boolean; bold?: boolean }) {
  return (
    <div className={`flex h-[23px] whitespace-nowrap ${bold ? "font-bold" : ""}`}>
      <span className="w-[27px] shrink-0">{n}</span>
      <p className={full ? `flex-1 ${fill}` : "flex-1"}>{children}</p>
    </div>
  );
}

function PanelOutline({ dy }: { dy: number }) {
  return (
    <g transform={`translate(0 ${dy})`}>
      <path d="M15 67h10a3 3 0 0 1 0 6h-4v17h4a3 3 0 0 1 0 6H15z" />
      <path d="M391 70H44v-3h-8a3 3 0 0 0-1 6l4 3h354q3-1 6-5 5-6 9-6h27a3 3 0 0 0 0-6h-27q-5 0-9 5-5 6-8 6z" />
      <path d="M408 93H44v3h-8a3 3 0 0 1-1-6q3-3 5-3h357q3-1 6-5 3-6 6-6h18a3 3 0 0 1 0 6h-12q-2 20 4 45h16a3 3 0 0 1 0 6h-20q-7-20-7-40z" />
      <path d="M445 59h23v31a3 3 0 0 1-6 0V65h-17a3 3 0 0 1 0-6z" />
      <path d="M445 133h23v-32a3 3 0 0 0-6 0v26h-17a3 3 0 0 0 0 6z" />
    </g>
  );
}

function BoardDrawing() {
  return (
    <svg width="506" height="250" viewBox="0 0 506 250" className="ml-[56px] mt-[19px]" fill="none" stroke="#444" strokeWidth="1">
      <path d="M0.500 250V49l5-5.500h474l4 4V250" />
      <PanelOutline dy={0} />
      <PanelOutline dy={81} />
      <path d="M221.500 185L412 4 458 51M462 53.500h42M500.500 54v196" />
      <path d="M412 4l-3 6-3-3zM500.500 54l2 7h-4z" fill="#333" />
      <circle cx="458.500" cy="53" r="1.500" fill="#000" />
    </svg>
  );
}

function WordWindow() {
  return (
    <section className="absolute bottom-0 left-[76px] top-[264px] flex w-[897px] flex-col overflow-hidden bg-[#bfdbff] shadow-[0_0_12px_rgba(0,0,0,0.45)]">
      <header className="flex h-[30px] shrink-0 items-center bg-white">
        <div className="ml-[40px] flex h-[21px] w-[115px] items-center gap-[9px] rounded-r-full border border-l-0 border-[#c9ced6] bg-[#f7f8fa] pl-[14px]">
          <button aria-label="保存" className="text-[#3a48b8]"><FaSave size={14} /></button>
          <button aria-label="撤销" className="ml-0.5 flex items-center gap-1 text-[#9aabc5]"><FaUndo size={11} /><Caret className="text-[#b5bcc8]" /></button>
          <button aria-label="重做" className="text-[#9aabc5]"><FaRedo size={11} /></button>
          <button aria-label="打开"><Folder className="h-[14px] w-[17px]" /></button>
        </div>
        <span className="ml-[9px] flex flex-col items-center gap-px"><span className="h-px w-1.5 bg-[#2d4f86]" /><Caret className="text-[#2d4f86]" /></span>
        <h1 className={`ml-[171px] flex-1 text-[13px] text-[#222] ${UI}`}>V116-73 [兼容模式] - Microsoft Word</h1>
        <div className="flex items-center gap-9 pr-[18px]">
          <button aria-label="最小化" className="h-px w-[10px] bg-black" />
          <button aria-label="最大化" className="size-[10px] border border-black" />
          <button aria-label="关闭"><svg width="11" height="11" viewBox="0 0 11 11"><path d="M0.500 0.500l10 10M10.500 0.500l-10 10" stroke="#000" /></svg></button>
        </div>
      </header>
      <div className={`flex h-[26px] shrink-0 items-end pl-[49px] text-[12px] text-[#16428b] ${UI}`}>
        <button className="h-[25px] w-[47px] rounded-t border border-b-0 border-[#8db2e3] bg-[#ebf3fc]">开始</button>
        {[["插入", "w-[58px]"], ["页面布局", "w-[73px]"], ["引用", "w-[57px]"], ["邮件", "w-[50px]"], ["审阅", "w-[56px]"], ["视图", "w-[50px]"], ["Acrobat", "w-[78px]"]].map(([t, w]) => (
          <button key={t} className={`h-[25px] ${w}`}>{t}</button>
        ))}
        <button aria-label="帮助" className="mb-1.5 ml-auto mr-[5px] flex size-[14px] items-center justify-center rounded-full border border-[#8db2e3] bg-[#2a5fd0] text-[10px] font-bold text-white">?</button>
      </div>
      <Ribbon />
      <div className="h-1.5 shrink-0 bg-[#a9c4ea]" />
      <div className="flex min-h-0 flex-1 bg-linear-to-b from-[#a5c2e9] via-[#5379ae] to-[#6f9ad8]">
        <div className="w-1 shrink-0 bg-linear-to-r from-[#bcd0ee] to-[#6488c4]" />
        <article className={`w-[854px] shrink-0 overflow-hidden bg-white pl-[65px] pr-[57px] text-[15px] leading-[23px] text-black shadow-[3px_0_6px_rgba(0,0,0,0.5)] ${SONG}`}>
          <div className="-mt-[15px]">
            <Item full><span className={`text-[14px] ${MONO}`}><span className={green}>Receiver</span> of this stepped paste file to carefully check this file before ordering the</span></Item>
            <Item><span className={`text-[14px] ${MONO}`}>stencils.</span> <Ret /></Item>
            <div className="h-[23px] pl-[185px]"><Ret /></div>
            <Item><span className="text-[16px]">NCAB Group</span><Ret /></Item>
            <Item n="2." full><span className={`text-[14px] ${UI}`}>P2</span> 厂针对 <span className={`text-[14px] ${UI}`}>NCAB</span> 客户，叠层结构为非起始铜箔的订单，“减薄铜” 流程后增加 “半成品检查” 流程。即只</Item>
            <Item full>要不是直接在层压基铜上进行的 “减薄铜”，则 “减薄铜” 流程后都需加<span className={red}>”</span> 半成品检查<span className={red}>”</span>流程，比如中间有</Item>
            <Item>电镀的情况<Ret /></Item>
            <Item n="3." full>贴<span className={green}>片文件</span>的命名为文件名+P（如 <M>4WA2606P.ZIP</M>，留意文件名为客户的文件名）；（该条 <M>CAM</M> 可不理会，发</Item>
            <Item>邮件时程序自动更改）<Ret /></Item>
            <Item n="4.">
              离子污染度：<span className={green}>非喷锡板</span><Le /><M>0.8ug.NaCl/cm²</M>，<span className={green}>喷锡板</span>（无铅/有铅）<Le /><M>1.0μg <span className={red}>NaCl</span>/cm²</M><Ret />
            </Item>
            <div className="h-[21px]"><Item n="5." bold>图形精度要求<Ret /></Item></div>
            <table className="ml-[26px] w-[478px] table-fixed border-collapse text-left leading-[20px]">
              <tbody>
                <tr className="h-[25px]">
                  <th className="w-[321px] whitespace-nowrap border border-black p-0 pl-2">最远的两个导体的间距（MARK 点最远间距）<Ret /></th>
                  <th className="border border-black p-0 text-center">刚性及<span className={green}>刚揉板</span><Ret /></th>
                </tr>
                {[["≤300mm", "± 0.100mm"], ["300~450mm", "± 0.125mm"], ["450~ 600mm", "± 0.150mm"]].map(([a, b]) => (
                  <tr key={a} className="h-6">
                    <td className="border border-black p-0 pl-2">{a}<Ret /></td>
                    <td className="border border-black p-0 text-center">{b}<Ret /></td>
                  </tr>
                ))}
              </tbody>
            </table>
            <div className="whitespace-nowrap text-[#1010b0]">
              <p className={fill}>6.每款订单（包括刚揉板）均需要提供涨缩测量图纸和孔位精度图纸，涨缩测量图纸需单独提供，孔位精度标</p>
              <p className={fill}>识可以放在《<span className={red}>biaozhu</span>》图中；涨缩测量图纸需包含：最远开窗导体（常规为 MARK 点）的 X 方向、Y 方向、</p>
              <p className="h-[23px]">对角线尺寸标识（如下图）；孔位精度需包含：最远孔和<span className={green}>孔之间</span>的尺寸标识。<Ret /></p>
            </div>
            <BoardDrawing />
          </div>
        </article>
        <div className="flex-1" />
        <div className="flex w-[15px] shrink-0 flex-col items-center bg-[#7d9fcf]">
          <div className="flex h-[19px] w-full flex-col items-center bg-[#b4cdf0]">
            <div className="h-0.5 w-[10px] bg-[#3b5c92]" />
            <svg width="12" height="12" viewBox="0 0 12 12" className="mt-1"><path d="M1 1h6v3h4v7H6V8H1z" fill="#e8eef8" stroke="#555" /></svg>
          </div>
          <CaretUp className="mt-1.5 text-[#33517f]" />
          <div className="mt-[430px] flex h-5 w-[14px] flex-col items-center justify-center gap-0.5 rounded-sm border border-[#5b7db2] bg-[#dce8f8]">
            {[0, 1, 2, 3].map((i) => <div key={i} className="h-px w-2 bg-[#6a84ae]" />)}
          </div>
          <Caret className="mt-auto text-[#33517f]" />
          <div className="mt-1 flex h-[45px] w-full flex-col items-center justify-around bg-[#a9c8f5] text-[#111]">
            <span className="flex flex-col"><CaretUp /><CaretUp /></span>
            <span className="size-[6px] rounded-full border border-[#333] bg-[#ccc]" />
            <span className="flex flex-col"><Caret /><Caret /></span>
          </div>
        </div>
        <div className="w-[2px] bg-[#b4cdf0]" />
      </div>
      <button aria-label="Office" className="absolute left-[5px] top-2 flex size-[37px] items-center justify-center rounded-full border border-[#9aa7ba] bg-linear-to-b from-[#f4f5f8] via-[#d5dae3] to-[#fafbfd] shadow">
        <svg width="24" height="24" viewBox="0 0 24 24" fill="none" strokeWidth="3">
          <rect x="2.500" y="2.500" width="9" height="8" rx="2" stroke="#e0571d" />
          <rect x="14" y="6" width="7" height="6" rx="2" stroke="#3a93d8" strokeWidth="2" />
          <rect x="4" y="13" width="7" height="7" rx="2" stroke="#eeb21a" />
          <rect x="13" y="13" width="8" height="8" rx="2" stroke="#63a83a" />
        </svg>
      </button>
    </section>
  );
}

export default function App() {
  return (
    <div className="relative h-screen min-h-[1040px] w-full overflow-hidden bg-linear-to-b from-[#0a9ff0] via-[#0078d0] to-[#18a6f2]">
      <GraphicEditor />
      <EdsWindow />
      <WordWindow />
      <div className="absolute left-[138px] top-[614px] h-[41px] w-[326px] border-4 border-[#fdfb14] shadow-[2px_2px_4px_rgba(0,0,0,0.7),inset_2px_2px_4px_rgba(0,0,0,0.5)]" />
      <svg width="70" height="44" viewBox="0 0 70 44" className="absolute left-[84px] top-[583px]">
        <path d="M3 3l44 26" stroke="#ff0808" strokeWidth="5" strokeLinecap="round" />
        <path d="M49 21l20 21-29-7z" fill="#ff0808" />
      </svg>
    </div>
  );
}
